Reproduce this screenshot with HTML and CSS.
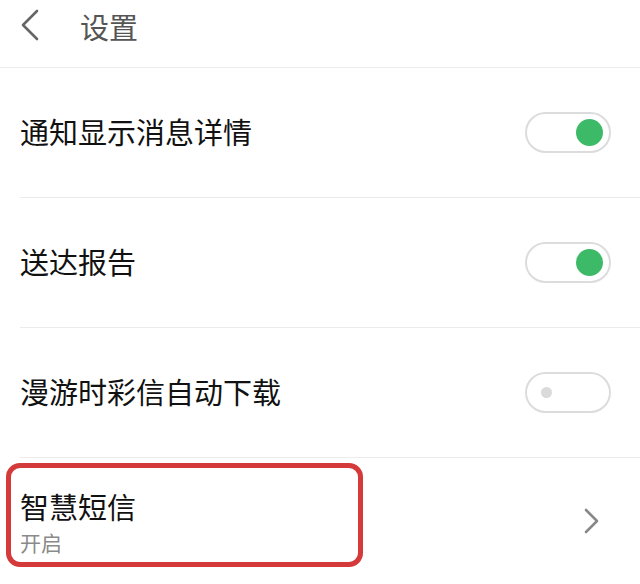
FILE: index.html
```html
<!DOCTYPE html>
<html lang="zh-CN">
<head>
  <meta charset="UTF-8" />
  <meta name="viewport" content="width=device-width, initial-scale=1" />
  <title>设置</title>
  <link rel="stylesheet" href="styles.css">
</head>
<body>
  <header class="topbar">
    <svg class="back" width="20" height="32" viewBox="0 0 20 32">
      <polyline points="17,2 3,16 17,30" fill="none" stroke="#666" stroke-width="2.6" stroke-linecap="round" stroke-linejoin="round" />
    </svg>
    <h1>设置</h1>
  </header>

  <main class="settings">
    <div class="row">
      <span class="label">通知显示消息详情</span>
      <span class="switch on"><span class="knob"></span></span>
    </div>
    <div class="row">
      <span class="label">送达报告</span>
      <span class="switch on"><span class="knob"></span></span>
    </div>
    <div class="row">
      <span class="label">漫游时彩信自动下载</span>
      <span class="switch"><span class="knob"></span></span>
    </div>
    <div class="row last">
      <div class="text">
        <span class="label">智慧短信</span>
        <span class="sub">开启</span>
      </div>
      <svg class="more" width="16" height="26" viewBox="0 0 16 26">
        <polyline points="3,2 14,13 3,24" fill="none" stroke="#888" stroke-width="2.6" stroke-linecap="round" stroke-linejoin="round" />
      </svg>
      <div class="mark"></div>
    </div>
  </main>
</body>
</html>
```

FILE: styles.css
```css
body {
  margin: 0;
  background: #fff;
  color: #111;
  font-family: "Noto Sans CJK SC", "Noto Sans", sans-serif;
  overflow: hidden;
}
.topbar {
  height: 68px;
  border-bottom: 1px solid #ececec;
  display: flex;
  align-items: flex-start;
  padding: 9px 0 0 20px;
  box-sizing: border-box;
}
.topbar .back {
  display: block;
}
.topbar h1 {
  margin: 0 0 0 40px;
  font-size: 29px;
  font-weight: normal;
  line-height: 34px;
  color: #555;
}
.settings {
  padding-left: 20px;
}
.row {
  position: relative;
  height: 129px;
  border-bottom: 1px solid #ececec;
  display: flex;
  align-items: center;
  justify-content: space-between;
  padding: 0 29px 4px 0;
  box-sizing: border-box;
  height: 130px;
}
.row .label {
  font-size: 29px;
  line-height: 36px;
  color: #111;
}
.switch {
  position: relative;
  width: 86px;
  height: 41px;
  border: 2px solid #dcdcdc;
  border-radius: 21px;
  box-sizing: border-box;
  margin-top: 4px;
}
.switch .knob {
  position: absolute;
  left: 14px;
  top: 13px;
  width: 11px;
  height: 11px;
  border-radius: 50%;
  background: #dadada;
}
.switch.on .knob {
  left: auto;
  right: 6px;
  top: 5px;
  width: 27px;
  height: 27px;
  background: #3dba68;
}
.row.last {
  border-bottom: none;
}
.row .text {
  display: flex;
  flex-direction: column;
}
.row .sub {
  margin-top: 5px;
  font-size: 21px;
  line-height: 26px;
  color: #8a8a8a;
}
.row .more {
  margin-right: 12px;
}
.mark {
  position: absolute;
  left: -14px;
  top: 5px;
  width: 357px;
  height: 104px;
  border: 5px solid #d43a3a;
  border-radius: 14px;
  box-sizing: border-box;
}
```
